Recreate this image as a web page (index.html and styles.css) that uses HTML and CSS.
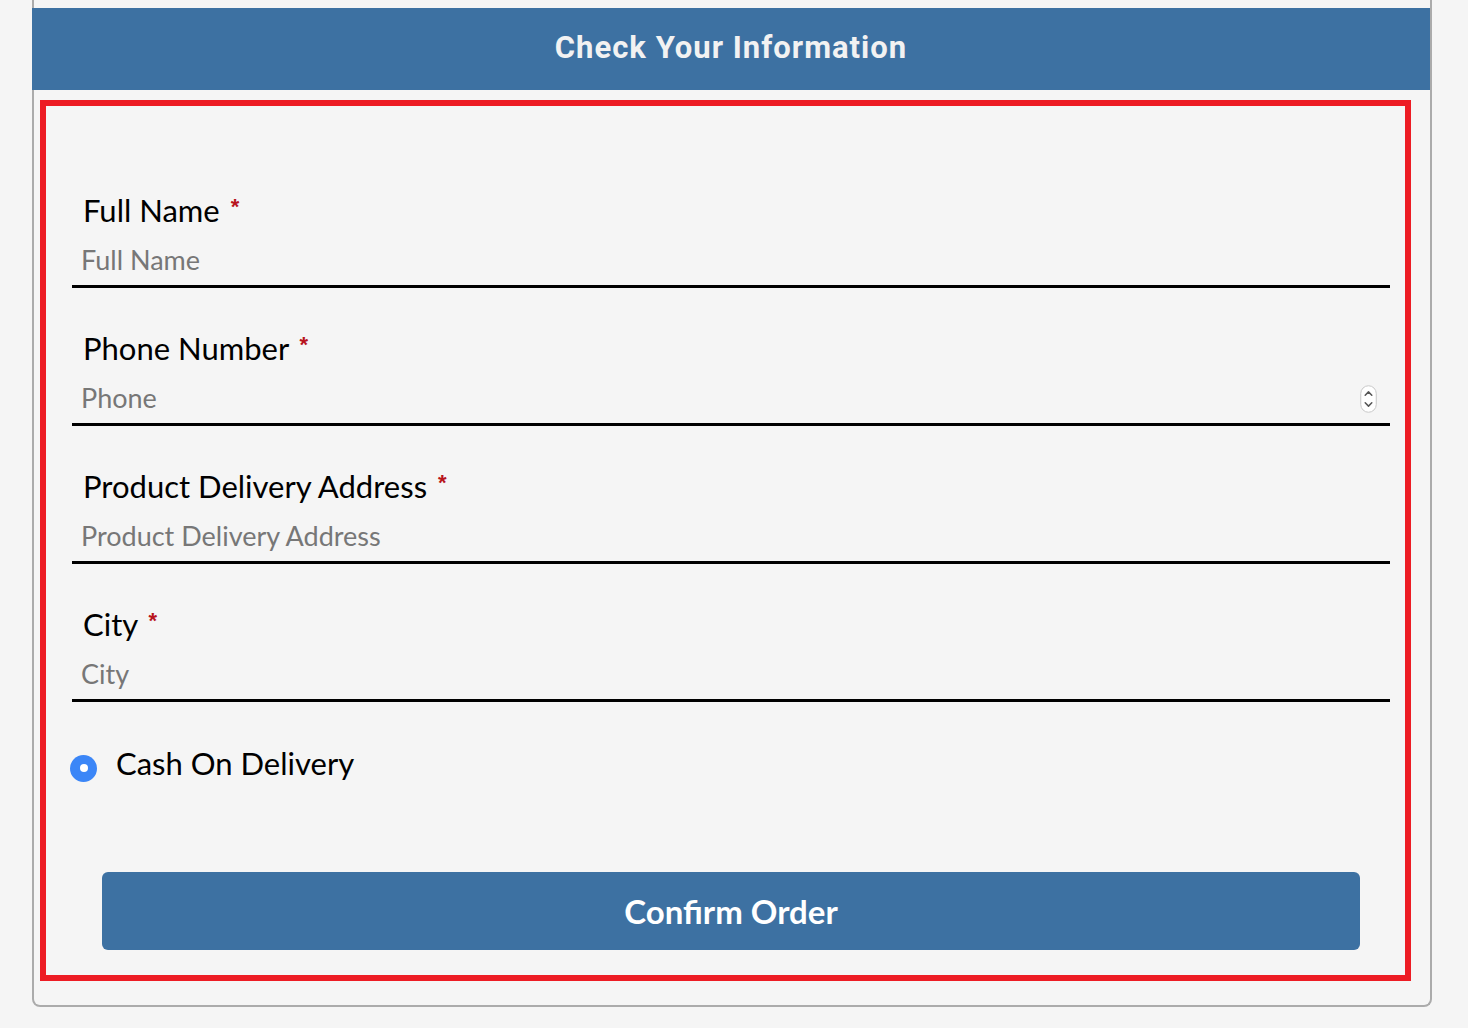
FILE: index.html
```html
<!DOCTYPE html>
<html>
<head>
<meta charset="utf-8">
<title>Check Your Information</title>
<link rel="stylesheet" href="styles.css">
</head>
<body>
<div class="card">
  <div class="card-header">Check Your Information</div>
  <form class="order-form">
    <div class="field">
      <label class="field-label">Full Name <span class="req">*</span></label>
      <input class="field-input" type="text" placeholder="Full Name">
    </div>
    <div class="field">
      <label class="field-label">Phone Number <span class="req">*</span></label>
      <div class="input-wrap">
        <input class="field-input" type="text" placeholder="Phone">
        <svg class="spinner" width="17" height="28" viewBox="0 0 17 28">
          <rect x="0.75" y="0.75" width="15.5" height="26.5" rx="7.75" fill="#ffffff" stroke="#c8c8c8" stroke-width="1"/>
          <path d="M5.2 10.2 L8.5 6.9 L11.8 10.2" fill="none" stroke="#555" stroke-width="1.5" stroke-linecap="round" stroke-linejoin="round"/>
          <path d="M5.2 17.8 L8.5 21.1 L11.8 17.8" fill="none" stroke="#555" stroke-width="1.5" stroke-linecap="round" stroke-linejoin="round"/>
        </svg>
      </div>
    </div>
    <div class="field">
      <label class="field-label">Product Delivery Address <span class="req">*</span></label>
      <input class="field-input" type="text" placeholder="Product Delivery Address">
    </div>
    <div class="field">
      <label class="field-label">City <span class="req">*</span></label>
      <input class="field-input" type="text" placeholder="City">
    </div>
    <div class="radio-row">
      <span class="radio-dot"></span>
      <span class="radio-text">Cash On Delivery</span>
    </div>
    <button class="confirm-btn" type="button">Confirm Order</button>
  </form>
</div>
</body>
</html>
```
FILE: styles.css
```css
* { box-sizing: border-box; }
html, body {
  margin: 0;
  padding: 0;
  background: #f5f5f5;
}
body {
  font-family: Lato, "Open Sans", sans-serif;
  color: #000;
}
.card {
  margin-left: 32px;
  width: 1400px;
  padding-top: 8px;
  border: 2px solid #ababab;
  border-top: none;
  border-radius: 0 0 8px 8px;
  background: #f5f5f5;
  padding-bottom: 24px;
}
.card-header {
  margin-left: -2px;
  height: 82px;
  padding-bottom: 3px;
  background: #3d71a2;
  color: #f2f2f2;
  font-family: Roboto, "Liberation Sans", sans-serif;
  font-weight: 700;
  font-size: 31px;
  letter-spacing: 1px;
  display: flex;
  align-items: center;
  justify-content: center;
}
.order-form {
  margin: 10px 19px 0 6px;
  border: 6px solid #ed1c24;
  padding: 86px 15px 25px 26px;
  display: flex;
  flex-direction: column;
}
.field {
  display: flex;
  flex-direction: column;
  margin-bottom: 42px;
}
.field-label {
  margin-left: 11px;
  font-size: 31px;
  line-height: 36px;
  height: 36px;
  color: #000;
}
.req {
  position: relative;
  top: -8px;
  margin-left: 3px;
  color: #b8141c;
  font-family: "Liberation Sans", sans-serif;
  font-weight: 700;
  font-size: 22px;
  line-height: 0;
}
.input-wrap {
  position: relative;
}
.field-input {
  display: block;
  width: 100%;
  height: 60px;
  border: none;
  border-bottom: 3px solid #000;
  background: transparent;
  padding: 6px 9px 0 9px;
  font-family: Lato, "Open Sans", sans-serif;
  font-size: 27px;
  color: #000;
  outline: none;
}
.field-input::placeholder {
  color: #777;
}
.spinner {
  position: absolute;
  right: 13px;
  top: 19px;
}
.radio-row {
  display: flex;
  align-items: center;
  margin-top: 1px;
  margin-left: -2px;
  height: 36px;
}
.radio-dot {
  width: 27px;
  height: 27px;
  border-radius: 50%;
  background: #3b86f7;
  display: flex;
  align-items: center;
  justify-content: center;
  margin-top: 10px;
}
.radio-dot::after {
  content: "";
  width: 8px;
  height: 8px;
  border-radius: 50%;
  background: #fff;
}
.radio-text {
  margin-left: 19px;
  font-size: 31px;
  line-height: 36px;
}
.confirm-btn {
  margin: 91px 30px 0 30px;
  height: 78px;
  border: none;
  border-radius: 6px;
  background: #3d71a2;
  color: #fff;
  font-family: Lato, "Open Sans", sans-serif;
  font-weight: 700;
  font-size: 33px;
  cursor: pointer;
}
```
